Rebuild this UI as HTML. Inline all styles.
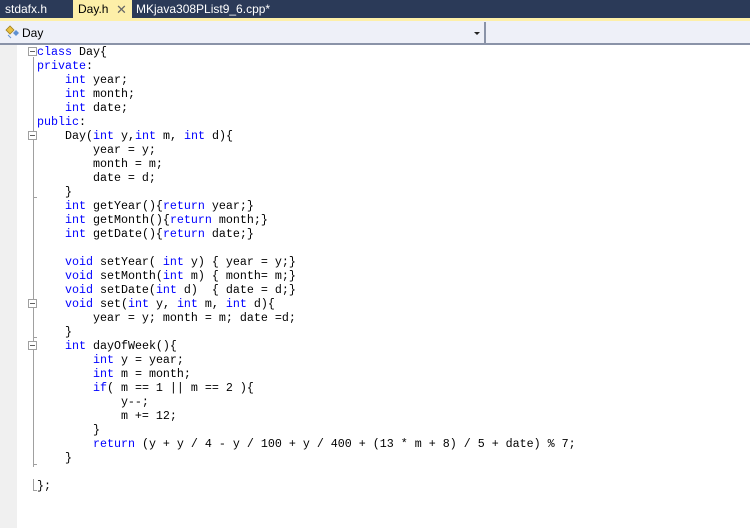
<!DOCTYPE html>
<html><head><style>
*{margin:0;padding:0}
body{width:750px;height:528px;overflow:hidden;background:#fff;position:relative;font-family:"Liberation Sans",sans-serif}
#tabs{position:absolute;left:0;top:0;width:750px;height:18px;background:#2b3a58}
#stripe{position:absolute;left:0;top:18px;width:750px;height:3px;background:#fdefa8}
.tab{position:absolute;top:1px;font-size:12px;color:#fff;line-height:17px}
#act{position:absolute;left:73px;top:0;width:59px;height:18px;background:#fdefa8}
#dd{position:absolute;left:0;top:21px;width:750px;height:22px;background:#eef0f8;border-bottom:2px solid #8a93a8}
#div{position:absolute;left:484px;top:22px;width:2px;height:22px;background:#8a93a8}
#margin{position:absolute;left:0;top:45px;width:17px;height:483px;background:#f0f0f0}
#code{position:absolute;left:37px;top:45px;font-family:"Liberation Mono",monospace;font-size:11.67px;line-height:14px;white-space:pre;color:#000}
.k{color:#0000ff}
.vl{position:absolute;left:33px;width:1px;background:#a0a0a0}
.fb{position:absolute;left:28px;width:7px;height:7px;border:1px solid #a0a0a0;background:#fff}
.fb:after{content:"";position:absolute;left:1px;top:3px;width:5px;height:1px;background:#606060}
.tk{position:absolute;left:33px;width:4px;height:1px;background:#a0a0a0}
</style></head><body>
<div id="tabs"></div>
<div id="act"></div>
<div id="stripe"></div>
<div class="tab" style="left:5px">stdafx.h</div>
<div class="tab" style="left:78px;color:#000">Day.h</div>
<div class="tab" style="left:116px;color:#666;font-size:13px">✕</div>
<div class="tab" style="left:136px">MKjava308PList9_6.cpp*</div>
<div id="dd"></div>
<div id="div"></div>
<svg style="position:absolute;left:5px;top:25px" width="16" height="14"><path d="M1 5 L5 1 L9 5 L5 9Z" fill="#e8c040" stroke="#a08020" stroke-width=".8"/><path d="M8 8 L11 5 L14 8 L11 11Z" fill="#6090d0"/><path d="M3 10 L6 13" stroke="#6090d0"/></svg>
<div style="position:absolute;left:22px;top:26px;font-size:12px">Day</div>
<div style="position:absolute;left:474px;top:32px;border-left:3px solid transparent;border-right:3px solid transparent;border-top:3px solid #222"></div>
<div id="margin"></div>
<div class="vl" style="top:57px;height:410px"></div>
<div class="vl" style="top:479px;height:12px"></div>
<div class="fb" style="top:47px"></div>
<div class="fb" style="top:131px"></div>
<div class="fb" style="top:299px"></div>
<div class="fb" style="top:341px"></div>
<div class="tk" style="top:197px"></div>
<div class="tk" style="top:337px"></div>
<div class="tk" style="top:464px"></div>
<div class="tk" style="top:490px"></div>
<div id="code"><span class="k">class</span> Day{
<span class="k">private</span>:
    <span class="k">int</span> year;
    <span class="k">int</span> month;
    <span class="k">int</span> date;
<span class="k">public</span>:
    Day(<span class="k">int</span> y,<span class="k">int</span> m, <span class="k">int</span> d){
        year = y;
        month = m;
        date = d;
    }
    <span class="k">int</span> getYear(){<span class="k">return</span> year;}
    <span class="k">int</span> getMonth(){<span class="k">return</span> month;}
    <span class="k">int</span> getDate(){<span class="k">return</span> date;}

    <span class="k">void</span> setYear( <span class="k">int</span> y) { year = y;}
    <span class="k">void</span> setMonth(<span class="k">int</span> m) { month= m;}
    <span class="k">void</span> setDate(<span class="k">int</span> d)  { date = d;}
    <span class="k">void</span> set(<span class="k">int</span> y, <span class="k">int</span> m, <span class="k">int</span> d){
        year = y; month = m; date =d;
    }
    <span class="k">int</span> dayOfWeek(){
        <span class="k">int</span> y = year;
        <span class="k">int</span> m = month;
        <span class="k">if</span>( m == 1 || m == 2 ){
            y--;
            m += 12;
        }
        <span class="k">return</span> (y + y / 4 - y / 100 + y / 400 + (13 * m + 8) / 5 + date) % 7;
    }

};</div>
</body></html>
